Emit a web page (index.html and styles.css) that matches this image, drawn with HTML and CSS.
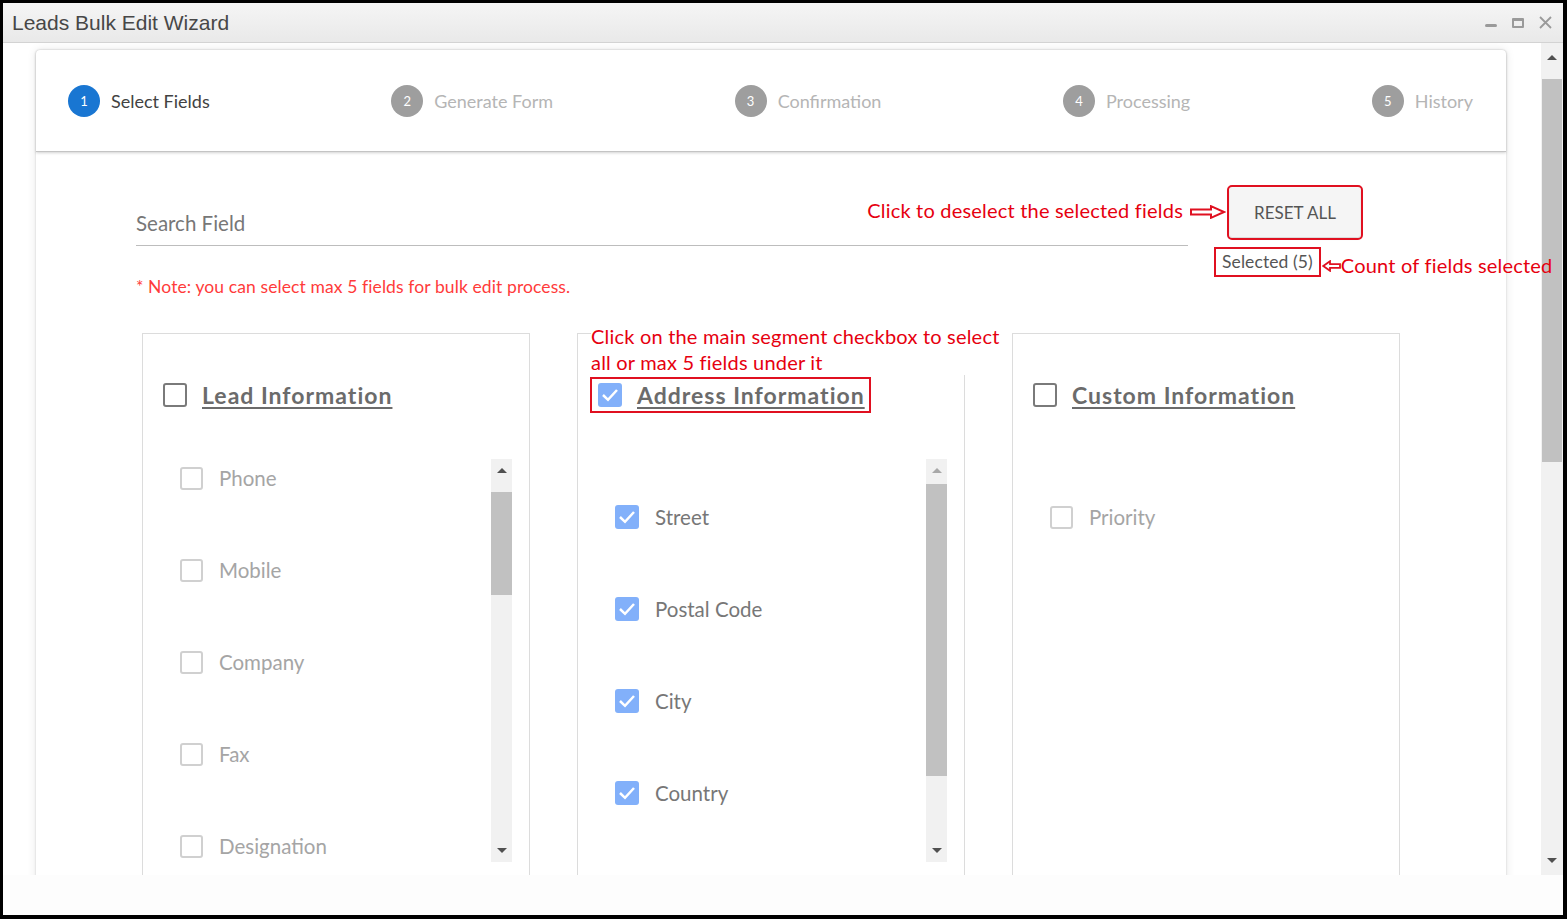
FILE: index.html
```html
<!DOCTYPE html>
<html lang="en">
<head>
<meta charset="utf-8">
<title>Leads Bulk Edit Wizard</title>
<link rel="stylesheet" href="styles.css">
</head>
<body>
<div class="window">
  <header class="titlebar">
    <span class="title">Leads Bulk Edit Wizard</span>
    <div class="controls">
      <span class="ctl-min"></span>
      <span class="ctl-max"></span>
      <svg class="ctl-close" viewBox="0 0 13 13"><path d="M1 1L12 12M12 1L1 12" stroke="#9a9a9a" stroke-width="1.8" fill="none"/></svg>
    </div>
  </header>
  <div class="main">
    <div class="viewport">
      <div class="card">
        <div class="stepper">
          <div class="step active"><span class="num">1</span><span class="step-label">Select Fields</span></div>
          <div class="step"><span class="num">2</span><span class="step-label">Generate Form</span></div>
          <div class="step"><span class="num">3</span><span class="step-label">Confirmation</span></div>
          <div class="step"><span class="num">4</span><span class="step-label">Processing</span></div>
          <div class="step"><span class="num">5</span><span class="step-label">History</span></div>
        </div>
        <div class="card-body">
          <div class="toolbar">
            <div class="search">Search Field</div>
            <div class="actions">
              <div class="reset-wrap">
                <div class="callout callout-reset">
                  <span>Click to deselect the selected fields</span>
                  <svg class="arrow-right" width="36" height="14" viewBox="0 0 36 14"><path d="M1 4.5H21V1.2L34 7L21 12.8V9.5H1Z" fill="#fff" stroke="#e01020" stroke-width="2"/></svg>
                </div>
                <div class="reset-btn">RESET ALL</div>
              </div>
              <div class="selected-wrap">
                <span class="selected">Selected (5)</span>
                <div class="callout callout-count">
                  <svg class="arrow-left" width="19" height="12" viewBox="0 0 19 12"><path d="M18 4.2H8V1.2L1.2 6L8 10.8V7.8H18Z" fill="#fff" stroke="#e01020" stroke-width="1.8"/></svg>
                  <span>Count of fields selected</span>
                </div>
              </div>
            </div>
          </div>
          <p class="note">* Note: you can select max 5 fields for bulk edit process.</p>
          <div class="panels">
            <section class="panel">
              <div class="panel-head">
                <span class="cb-head"></span>
                <span class="panel-title">Lead Information</span>
              </div>
              <div class="list">
                <div class="items">
                  <div class="item"><span class="cb"></span>Phone</div>
                  <div class="item"><span class="cb"></span>Mobile</div>
                  <div class="item"><span class="cb"></span>Company</div>
                  <div class="item"><span class="cb"></span>Fax</div>
                  <div class="item"><span class="cb"></span>Designation</div>
                </div>
                <div class="pscroll">
                  <div class="ps-btn"><span class="tri-up"></span></div>
                  <div class="ps-thumb thumb-lead"></div>
                  <div class="ps-btn ps-down"><span class="tri-down"></span></div>
                </div>
              </div>
            </section>
            <section class="panel">
              <div class="panel-head marked">
                <div class="callout callout-head">Click on the main segment checkbox to select<br>all or max 5 fields under it</div>
                <span class="cb-head on"><svg viewBox="0 0 24 24"><path d="M5 12L10 16.8L19 7" stroke="#fff" stroke-width="2.5" fill="none"/></svg></span>
                <span class="panel-title">Address Information</span>
              </div>
              <div class="list">
                <div class="items items-offset">
                  <div class="item on"><span class="cb on"><svg viewBox="0 0 24 24"><path d="M5 12L10 16.8L19 7" stroke="#fff" stroke-width="2.5" fill="none"/></svg></span>Street</div>
                  <div class="item on"><span class="cb on"><svg viewBox="0 0 24 24"><path d="M5 12L10 16.8L19 7" stroke="#fff" stroke-width="2.5" fill="none"/></svg></span>Postal Code</div>
                  <div class="item on"><span class="cb on"><svg viewBox="0 0 24 24"><path d="M5 12L10 16.8L19 7" stroke="#fff" stroke-width="2.5" fill="none"/></svg></span>City</div>
                  <div class="item on"><span class="cb on"><svg viewBox="0 0 24 24"><path d="M5 12L10 16.8L19 7" stroke="#fff" stroke-width="2.5" fill="none"/></svg></span>Country</div>
                </div>
                <div class="pscroll">
                  <div class="ps-btn"><span class="tri-up light"></span></div>
                  <div class="ps-thumb thumb-address"></div>
                  <div class="ps-btn ps-down"><span class="tri-down"></span></div>
                </div>
              </div>
            </section>
            <section class="panel">
              <div class="panel-head">
                <span class="cb-head"></span>
                <span class="panel-title">Custom Information</span>
              </div>
              <div class="list">
                <div class="items items-offset">
                  <div class="item"><span class="cb"></span>Priority</div>
                </div>
              </div>
            </section>
          </div>
        </div>
      </div>
    </div>
    <div class="vscroll">
      <div class="vs-up"><span class="tri-up"></span></div>
      <div class="vs-thumb"></div>
      <div class="vs-down"><span class="tri-down"></span></div>
    </div>
  </div>
  <div class="footer"></div>
</div>
</body>
</html>
```
FILE: styles.css
```css
* { box-sizing: border-box; }
html, body { margin: 0; padding: 0; background: #fff; }
body { font-family: Lato, "Open Sans", sans-serif; }

.window {
  width: 1567px;
  height: 919px;
  border: solid #000;
  border-width: 3px 4px 4px 3px;
  display: flex;
  flex-direction: column;
  background: #fff;
  overflow: hidden;
}

/* title bar */
.titlebar {
  flex: none;
  height: 40px;
  display: flex;
  align-items: center;
  justify-content: space-between;
  padding: 0 11px 0 9px;
  background: linear-gradient(#f5f5f5, #e9e9e9);
  border-bottom: 1px solid #d3d3d3;
}
.title {
  font-family: "Liberation Sans", Arial, sans-serif;
  font-size: 21px;
  color: #474747;
}
.controls { display: flex; align-items: center; gap: 15px; }
.ctl-min { width: 12px; height: 3px; background: #9a9a9a; border-radius: 2px; margin-top: 5px; }
.ctl-max { width: 12px; height: 10px; border: 2px solid #9a9a9a; border-top-width: 3px; border-radius: 1px; }
.ctl-close { width: 13px; height: 13px; display: block; }

/* main area: clips the scrolled content at its bottom edge */
.main { flex: none; height: 832px; display: flex; overflow: hidden; }
.viewport {
  flex: 1;
  min-width: 0;
  padding: 7px 0 0 33px;
}
.card {
  width: 1470px;
  min-height: 1000px;
  background: #fff;
  border-radius: 4px;
  box-shadow: 0 0 10px rgba(0, 0, 0, 0.10), 0 0 2px rgba(0, 0, 0, 0.18);
}

/* stepper */
.stepper {
  height: 102px;
  display: flex;
  align-items: center;
  justify-content: space-between;
  padding: 0 33px 0 32px;
  border-bottom: 1px solid #c4c4c4;
  border-radius: 4px 4px 0 0;
  box-shadow: 0 1px 3px rgba(0, 0, 0, 0.18);
}
.step { display: flex; align-items: center; gap: 11px; }
.num {
  width: 32px;
  height: 32px;
  border-radius: 50%;
  background: #9e9e9e;
  color: #fff;
  font-size: 13px;
  display: flex;
  align-items: center;
  justify-content: center;
}
.step.active .num { background: #1976d2; }
.step-label { font-size: 18px; color: #b5b5b5; }
.step.active .step-label { color: #424242; }

/* toolbar */
.toolbar { display: flex; align-items: flex-start; margin: 36px 0 0 100px; }
.search {
  width: 1052px;
  margin-top: 13px;
  padding: 10px 0;
  line-height: 24px;
  font-size: 20.5px;
  color: #777;
  border-bottom: 1px solid #bdbdbd;
}
.actions { margin-left: 42px; display: flex; flex-direction: column; align-items: flex-start; }
.reset-wrap { position: relative; }
.reset-btn {
  width: 130px;
  height: 49px;
  display: flex;
  align-items: center;
  justify-content: center;
  background: #f5f5f5;
  color: #555;
  font-size: 17px;
  border-radius: 2px;
  box-shadow: 0 1px 3px rgba(0, 0, 0, 0.22);
  outline: 2px solid #e01020;
  outline-offset: 1px;
}
.selected-wrap { position: relative; margin: 10px 0 0 -16px; }
.selected {
  display: block;
  border: 2px solid #e01020;
  padding: 3px 6px;
  font-size: 17.5px;
  letter-spacing: 0.1px;
  line-height: 20px;
  color: #555;
  white-space: nowrap;
}

/* annotation callouts */
.callout {
  position: absolute;
  z-index: 5;
  color: #e6000f;
  font-size: 20px;
  letter-spacing: 0.2px;
  line-height: 24px;
  white-space: nowrap;
}
.callout-reset { right: calc(100% + 4px); top: 10px; display: flex; align-items: center; gap: 7px; }
.callout-reset .arrow-right { margin-top: 3px; }
.callout-count { left: calc(100% + 1px); top: 6px; display: flex; align-items: center; }
.callout-count .arrow-left { margin-top: 2px; }
.callout-head { left: -1px; bottom: calc(100% + 4px); line-height: 26px; background: #fff; }

.note { margin: 0 0 0 100px; font-size: 17.5px; letter-spacing: 0.1px; line-height: 20px; color: #ff3b3b; }

/* panels */
.panels { display: flex; justify-content: center; gap: 47px; margin-top: 36px; }
.panel { flex: none; width: 388px; height: 640px; border: 1px solid #dcdcdc; }
.panel-head {
  position: relative;
  display: flex;
  align-items: center;
  gap: 15px;
  width: fit-content;
  height: 36px;
  margin: 43px 0 0 12px;
  padding: 0 4px 0 6px;
  border: 2px solid transparent;
}
.panel-head.marked { border-color: #e01020; }
.cb-head {
  flex: none;
  width: 24px;
  height: 24px;
  border: 2.5px solid #7a7a7a;
  border-radius: 3px;
}
.cb-head.on { background: #82b0fa; border-color: #82b0fa; }
.cb-head svg, .cb svg { display: block; width: 100%; height: 100%; }
.cb-head.on svg { margin: -2.5px; width: 24px; height: 24px; }
.panel-title {
  font-weight: 700;
  font-size: 23px;
  letter-spacing: 1px;
  color: #6b6b6b;
  text-decoration: underline;
  text-decoration-thickness: 2px;
  text-underline-offset: 3px;
}

.list { display: flex; height: 403px; margin: 46px 17px 0 17px; }
.items { flex: 1; overflow: hidden; padding-left: 20px; }
.items-offset { padding-top: 39px; }
.item {
  display: flex;
  align-items: center;
  gap: 16px;
  height: 38px;
  margin-bottom: 54px;
  font-size: 20.5px;
  color: #a5a5a5;
}
.item.on { color: #777; }
.cb {
  flex: none;
  width: 23px;
  height: 23px;
  border: 2px solid #d0d0d0;
  border-radius: 3px;
}
.cb.on { width: 24px; height: 24px; background: #82b0fa; border-color: #82b0fa; border-width: 0; }

/* scrollbars */
.pscroll { flex: none; width: 21px; background: #f1f1f1; display: flex; flex-direction: column; }
.ps-btn { flex: none; height: 22px; display: flex; align-items: center; justify-content: center; }
.ps-down { margin-top: auto; height: 23px; }
.ps-thumb { flex: none; width: 100%; background: #c1c1c1; }
.thumb-lead { margin-top: 11px; height: 103px; }
.thumb-address { margin-top: 3px; height: 292px; }

.tri-up { width: 0; height: 0; border-left: 5px solid transparent; border-right: 5px solid transparent; border-bottom: 5px solid #505050; }
.tri-up.light { border-bottom-color: #a8a8a8; }
.tri-down { width: 0; height: 0; border-left: 5px solid transparent; border-right: 5px solid transparent; border-top: 5px solid #505050; }

.vscroll { flex: none; width: 22px; background: #f1f1f1; display: flex; flex-direction: column; align-items: center; }
.vs-up { flex: none; height: 28px; display: flex; align-items: center; justify-content: center; }
.vs-thumb { flex: none; width: 20px; height: 383px; margin-top: 8px; background: #c1c1c1; }
.vs-down { margin-top: auto; flex: none; height: 30px; display: flex; align-items: center; justify-content: center; }

.footer { flex: none; height: 40px; background: #fdfdfd; }
```
